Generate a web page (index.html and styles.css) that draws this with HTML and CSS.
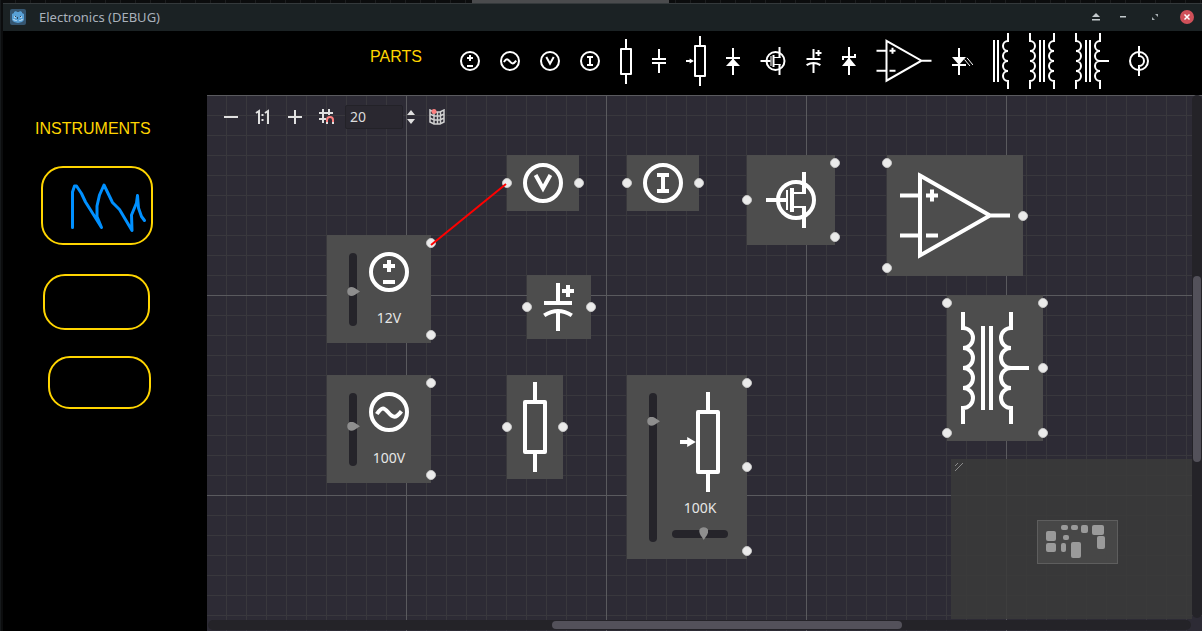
FILE: index.html
```
<!DOCTYPE html>
<html lang="en">
<head>
<meta charset="utf-8">
<title>Electronics (DEBUG)</title>
<link rel="stylesheet" href="styles.css">
</head>
<body>
<svg class="defs" aria-hidden="true">
  <symbol id="dc" viewBox="0 0 20 20"><circle cx="10" cy="10" r="9"/><path d="M10 4v6M7 7h6M7 15h6"/></symbol>
  <symbol id="ac" viewBox="0 0 20 20"><circle cx="10" cy="10" r="9"/><path d="M3.9 11C5.2 9 6 8.2 7 8.2C8.9 8.2 10.4 12.4 12.7 12.4C14 12.4 15 11.2 16.2 9.6"/></symbol>
  <symbol id="voltmeter" viewBox="0 0 20 20"><circle cx="10" cy="10" r="9"/><path d="M6.3 6L10 12.7L13.7 6"/></symbol>
  <symbol id="ammeter" viewBox="0 0 20 20"><circle cx="10" cy="10" r="9"/><path d="M7 6h6M7 14h6M10 6v8"/></symbol>
  <symbol id="resistor" viewBox="0 0 12 45"><rect x="1" y="10" width="10" height="25" stroke-linejoin="round"/><path d="M6 0v9M6 36v9"/></symbol>
  <symbol id="capacitor" viewBox="0 0 14 24"><path d="M0 10h14M0 14h14M7 0v9M7 15v9"/></symbol>
  <symbol id="pot" viewBox="0 0 20 50"><rect x="9" y="10" width="10" height="30" stroke-linejoin="round"/><path d="M14 0v9M14 41v9M0 25h4"/><path class="solid" d="M3.6 22.5L7.9 25L3.6 27.5z"/></symbol>
  <symbol id="diode" viewBox="0 0 14 27"><path d="M7 0v27M0 10h14"/><path class="solid" d="M7 10.500L14 18H0z"/></symbol>
  <symbol id="mosfet" viewBox="0 0 26 28"><g transform="translate(.5 0)"><circle cx="15" cy="14" r="9"/><path d="M0 14h10M13 8v12M19 0v11M19 17v11"/><path stroke-width="1" d="M10.500 9v10M13 10.500h7M13 17.500h7"/></g></symbol>
  <symbol id="polar" viewBox="0 0 16 24"><path d="M7.500 0v9.500M.5 10h14M7.500 14v10M.6 16.200Q7.500 11.800 14.400 16.200M12.500 1v6M9.500 4h6"/></symbol>
  <symbol id="zener" viewBox="0 0 14 28"><path d="M7 0v28M1 13v-3h12v-3"/><path class="solid" d="M7 10.500L14 19H0z"/></symbol>
  <symbol id="opamp" viewBox="0 0 56 44"><path d="M10.500 1.800L45.500 21.700L10.500 41.700zM45.500 21.700h10M.5 11.700h9M.5 31.700h9M16.500 8.700v6M13.500 11.700h6M13.500 31.700h6"/></symbol>
  <symbol id="led" viewBox="0 0 21 27"><path d="M7 0v27M0 17h14"/><path class="solid" d="M0 9H14L7 17z"/><path stroke-width="1" d="M12.500 11.500l5.500 6.500M15 9.800l6 7.200"/></symbol>
  <symbol id="choke" viewBox="0 0 16 56"><path d="M1 7v42M5 7v42M15 0V8a5 5 0 0 0 0 10a5 5 0 0 0 0 10a5 5 0 0 0 0 10a5 5 0 0 0 0 10V56"/></symbol>
  <symbol id="transformer" viewBox="0 0 26 56"><path d="M1 0V8a5 5 0 0 1 0 10a5 5 0 0 1 0 10a5 5 0 0 1 0 10a5 5 0 0 1 0 10V56M11 7v42M15 7v42M25 0V8a5 5 0 0 0 0 10a5 5 0 0 0 0 10a5 5 0 0 0 0 10a5 5 0 0 0 0 10V56"/></symbol>
  <symbol id="tapped" viewBox="0 0 34 56"><path d="M1 0V8a5 5 0 0 1 0 10a5 5 0 0 1 0 10a5 5 0 0 1 0 10a5 5 0 0 1 0 10V56M11 7v42M15 7v42M25 0V8a5 5 0 0 0 0 10a5 5 0 0 0 0 10a5 5 0 0 0 0 10a5 5 0 0 0 0 10V56M25 28h9"/></symbol>
  <symbol id="lamp" viewBox="0 0 20 30"><circle cx="10" cy="15" r="9"/><path d="M10 0v10a5 5 0 0 1 0 10v10"/></symbol>
</svg>

<div class="window">
  <header class="titlebar">
    <svg class="app-icon" viewBox="0 0 16 16" width="16" height="16"><rect width="16" height="16" rx="2" fill="#355570"/><path fill="#58a0d6" d="M2 5l2-1V3l2-1 1 1h2l1-1 2 1v1l2 1v6l-2 2-4 1-4-1-2-2z"/><path fill="#a5cdea" d="M4 7h2v2H4zM10 7h2v2h-2zM3 10h2v1h2v1h2v-1h2v-1h2v1l-2 1H5l-2-1z"/><path fill="#2a4660" d="M5 7h1v1H5zM10 7h1v1h-1zM7 8h1v2H7z"/></svg>
    <h1 class="title">Electronics (DEBUG)</h1>
    <div class="window-buttons">
      <button aria-label="Shade"><svg viewBox="0 0 16 16"><path fill="#c3c9cc" d="M8 4l4 4H4zM4 10h8v1.500H4z"/></svg></button>
      <button aria-label="Minimize"><svg viewBox="0 0 16 16"><path fill="#c3c9cc" d="M5 7h6v1.500H5z"/></svg></button>
      <button aria-label="Maximize"><svg viewBox="0 0 16 16"><path fill="#a5adb1" d="M8 5h3v3zM5 8v3h3z"/></svg></button>
      <button aria-label="Close"><svg viewBox="0 0 16 16"><circle cx="8" cy="8" r="7" fill="#cf5059"/><path stroke="#fff" stroke-width="1.500" d="M5.500 5.500l5 5M10.500 5.500l-5 5"/></svg></button>
    </div>
  </header>

  <nav class="parts">
    <h2 class="heading parts-heading">PARTS</h2>
    <button class="part" aria-label="DC source"><svg class="sym" width="20" height="20"><use href="#dc"/></svg></button>
    <button class="part" aria-label="AC source"><svg class="sym" width="20" height="20"><use href="#ac"/></svg></button>
    <button class="part" aria-label="Voltmeter"><svg class="sym" width="20" height="20"><use href="#voltmeter"/></svg></button>
    <button class="part" aria-label="Ammeter"><svg class="sym" width="20" height="20"><use href="#ammeter"/></svg></button>
    <button class="part" aria-label="Resistor"><svg class="sym" width="12" height="45"><use href="#resistor"/></svg></button>
    <button class="part" aria-label="Capacitor"><svg class="sym" width="14" height="24"><use href="#capacitor"/></svg></button>
    <button class="part" aria-label="Potentiometer"><svg class="sym" width="20" height="50"><use href="#pot"/></svg></button>
    <button class="part" aria-label="Diode"><svg class="sym" width="14" height="27"><use href="#diode"/></svg></button>
    <button class="part" aria-label="MOSFET"><svg class="sym" width="26" height="28"><use href="#mosfet"/></svg></button>
    <button class="part" aria-label="Polarized capacitor"><svg class="sym" width="16" height="24"><use href="#polar"/></svg></button>
    <button class="part" aria-label="Zener diode"><svg class="sym" width="14" height="28"><use href="#zener"/></svg></button>
    <button class="part" aria-label="Op-amp"><svg class="sym" width="56" height="44"><use href="#opamp"/></svg></button>
    <button class="part" aria-label="LED"><svg class="sym" width="21" height="27"><use href="#led"/></svg></button>
    <button class="part" aria-label="Inductor"><svg class="sym" width="16" height="56"><use href="#choke"/></svg></button>
    <button class="part" aria-label="Transformer"><svg class="sym" width="26" height="56"><use href="#transformer"/></svg></button>
    <button class="part" aria-label="Center-tapped transformer"><svg class="sym" width="34" height="56"><use href="#tapped"/></svg></button>
    <button class="part" aria-label="Lamp"><svg class="sym" width="20" height="30"><use href="#lamp"/></svg></button>
  </nav>

  <aside class="sidebar">
    <h2 class="heading">INSTRUMENTS</h2>
    <button class="instrument scope" aria-label="Oscilloscope"><svg viewBox="0 0 108 75" width="108" height="75"><path d="M29.500 59.500V24L31.500 18h2L38.500 25.500L42.500 34L48.500 43.500L58.500 59.500L54 48.500V38L56.500 27L61 17L69.500 34.500L76.500 41.500L89 62.500L88.500 47L93.500 35L94.500 27.500L95.500 40L98.500 48.500L101.500 52.500"/></svg></button>
    <button class="instrument second" aria-label="Instrument 2"></button>
    <button class="instrument third" aria-label="Instrument 3"></button>
  </aside>

  <main class="graph">
    <div class="graph-tools">
      <button class="tool" aria-label="Zoom out"><svg viewBox="0 0 16 16"><path stroke="#e0e0e0" stroke-width="2" d="M1 8h14"/></svg></button>
      <button class="tool" aria-label="Zoom reset"><svg viewBox="0 0 16 16"><path fill="none" stroke="#e0e0e0" stroke-width="2" d="M1 4l3-2v13M10 4l3-2v13M7.500 5v2M7.500 10v2"/></svg></button>
      <button class="tool" aria-label="Zoom in"><svg viewBox="0 0 16 16"><path stroke="#e0e0e0" stroke-width="2" d="M1 8h14M8 1v14"/></svg></button>
      <button class="tool" aria-label="Snap to grid"><svg viewBox="0 0 16 16"><path fill="none" stroke="#e0e0e0" stroke-width="2" d="M4 0v14M10 0v6M0 4h14M0 10h7"/><path fill="none" stroke="#fc7f7f" stroke-width="2" d="M8 13v-2a3 3 0 0 1 6 0v2"/><path stroke="#e0e0e0" stroke-width="2" d="M8 13v2M14 13v2"/></svg></button>
      <input class="snap" type="text" value="20" aria-label="Snap distance">
      <button class="stepper" aria-label="Change snap distance"><svg viewBox="0 0 8 16" width="8" height="16"><path fill="#e0e0e0" d="M4 1l4 5H0zM4 15l4-5H0z"/></svg></button>
      <button class="tool map-tool" aria-label="Toggle minimap"><svg viewBox="0 0 16 16"><path fill="none" stroke="#d0d0d0" stroke-width="1.500" d="M1 1v12l4 2h6l4-2V1l-4 2H5zM5 3v12M8.500 3v12M11.500 3v12M1 5l4 2h6l4-2M1 9l4 2h6l4-2"/><circle cx="5" cy="2.500" r="2.500" fill="#fc7f7f"/></svg></button>
    </div>

    <section class="node n-dc">
      <input class="vslider" type="range" value="47" aria-label="Voltage">
      <div class="node-col"><svg class="sym" width="40" height="40"><use href="#dc"/></svg><output>12V</output></div>
      <div class="ports right"><i></i><i></i></div>
    </section>
    <section class="node n-ac">
      <input class="vslider" type="range" value="55" aria-label="Amplitude">
      <div class="node-col"><svg class="sym" width="40" height="40"><use href="#ac"/></svg><output>100V</output></div>
      <div class="ports right"><i></i><i></i></div>
    </section>
    <section class="node n-volt">
      <svg class="sym" width="40" height="40"><use href="#voltmeter"/></svg>
      <div class="ports left"><i></i></div><div class="ports right"><i></i></div>
    </section>
    <section class="node n-amp">
      <svg class="sym" width="40" height="40"><use href="#ammeter"/></svg>
      <div class="ports left"><i></i></div><div class="ports right"><i></i></div>
    </section>
    <section class="node n-mosfet">
      <svg class="sym" width="52" height="56"><use href="#mosfet"/></svg>
      <div class="ports left"><i></i></div><div class="ports right"><i></i><i></i></div>
    </section>
    <section class="node n-opamp">
      <svg class="sym" width="112" height="88"><use href="#opamp"/></svg>
      <div class="ports left"><i></i><i></i></div><div class="ports right"><i></i></div>
    </section>
    <section class="node n-polar">
      <svg class="sym" width="32" height="48"><use href="#polar"/></svg>
      <div class="ports left"><i></i></div><div class="ports right"><i></i></div>
    </section>
    <section class="node n-resistor">
      <svg class="sym" width="24" height="90"><use href="#resistor"/></svg>
      <div class="ports left"><i></i></div><div class="ports right"><i></i></div>
    </section>
    <section class="node n-pot">
      <input class="vslider" type="range" value="83" aria-label="Resistance">
      <div class="node-col tight"><svg class="sym" width="40" height="100"><use href="#pot"/></svg><output>100K</output><input class="hslider" type="range" value="58" aria-label="Wiper position"></div>
      <div class="ports right"><i></i><i></i><i></i></div>
    </section>
    <section class="node n-tapped">
      <svg class="sym" width="68" height="112"><use href="#tapped"/></svg>
      <div class="ports left"><i></i><i></i></div><div class="ports right"><i></i><i></i><i></i></div>
    </section>

    <svg class="wire" width="400" height="200"><path d="M224 150L299 89"/></svg>

    <div class="minimap">
      <svg class="grip" viewBox="0 0 8 8" width="8" height="8"><path d="M0 8L8 0M0 3L3 0"/></svg>
      <svg class="overview" viewBox="0 0 81 44" width="81" height="44">
        <rect x=".5" y=".5" width="80" height="43" fill="#474747" stroke="#5e5e5e"/>
        <g fill="#9a9a9a"><rect x="9" y="11" width="10" height="10" rx="2"/><rect x="9" y="23" width="10" height="9" rx="2"/><rect x="24" y="5" width="7" height="5" rx="2"/><rect x="34" y="5" width="7" height="5" rx="2"/><rect x="26" y="15" width="6" height="5" rx="2"/><rect x="24" y="23" width="5" height="9" rx="2"/><rect x="34" y="22" width="10" height="16" rx="2"/><rect x="44" y="5" width="7" height="8" rx="2"/><rect x="55" y="5" width="12" height="10" rx="2"/><rect x="60" y="16" width="8" height="13" rx="2"/></g>
      </svg>
    </div>
    <div class="scroll scroll-y"><div class="scroll-thumb"></div></div>
    <div class="scroll scroll-x"><div class="scroll-thumb"></div></div>
  </main>
</div>
</body>
</html>
```

FILE: styles.css
```
* { box-sizing: border-box; }

body {
  margin: 0;
  background:
    linear-gradient(#4a4b4d, #4a4b4d) 472px 0 / 197px 3px no-repeat,
    repeating-linear-gradient(90deg, #1c1d1e 0 1px, #0b0c0d 1px 15px);
  font: 14px/20px "Noto Sans", sans-serif;
  color: #e6e6e6;
}

button {
  padding: 0;
  border: 0;
  background: none;
  color: inherit;
  font: inherit;
}

svg { display: block; flex: none; }

.defs { position: absolute; width: 0; height: 0; }

.sym { fill: none; stroke: #fff; stroke-width: 2; }
.solid { fill: #fff; stroke: none; }

.window {
  display: grid;
  grid-template: 28px 64px 1fr / 204px 1fr;
  height: 100vh;
  padding: 3px 0 0 2px;
  border-left: 1px solid #16191b;
  background: #000;
  background-clip: content-box;
}

/* Title bar */
.titlebar {
  grid-column: 1 / -1;
  display: flex;
  align-items: center;
  padding: 0 7px 1px;
  border-top: 1px solid #34393b;
  background: #1b2224;
}
.title {
  flex: 1;
  margin: 0 0 0 13px;
  font-size: 13px;
  font-weight: 400;
  color: #a9b1bb;
}
.window-buttons { display: flex; gap: 16px; }
.window-buttons button:first-child { margin-right: -5px; }
.window-buttons svg { width: 16px; height: 16px; }

/* Part palette */
.heading {
  margin: 0;
  font: 16px/20px "Liberation Sans", Arial, sans-serif;
  color: #ffd500;
}
.parts {
  grid-column: 1 / -1;
  display: flex;
  align-items: center;
  gap: 20px;
  padding: 0 0 4px 367px;
}
.parts-heading { flex: 0 0 70px; padding: 0 0 8px; }

/* Instruments */
.sidebar {
  display: flex;
  flex-direction: column;
  align-items: flex-start;
  padding: 24px 0 0 32px;
}
.instrument { border: 2px solid #ffd500; border-radius: 22px; }
.instrument path { fill: none; stroke: #0090ff; stroke-width: 3; stroke-linejoin: round; stroke-linecap: round; }
.scope { margin: 27px 0 0 6px; }
.second { width: 107px; height: 56px; margin: 29px 0 0 8px; }
.third { width: 103px; height: 53px; margin: 26px 0 0 13px; }

/* Graph canvas */
.graph {
  position: relative;
  overflow: hidden;
  background:
    linear-gradient(90deg, #5a5a5e 1px, transparent 1px) 199px 0 / 200px 200px,
    linear-gradient(#5a5a5e 1px, transparent 1px) 0 0 / 200px 200px,
    linear-gradient(90deg, #39383d 1px, transparent 1px) 19px 0 / 20px 20px,
    linear-gradient(#39383d 1px, transparent 1px) 0 0 / 20px 20px,
    #2d2b35;
}
.graph-tools {
  position: absolute;
  left: 8px;
  top: 10px;
  display: flex;
  align-items: center;
}
.tool { width: 32px; height: 24px; padding: 0 8px; }
.tool svg { width: 16px; height: 16px; }
.snap {
  width: 58px;
  height: 24px;
  margin: 0 4px 0 2px;
  padding: 0 4px 2px;
  border: 1px solid #232228;
  border-radius: 2px;
  background: #2a2830;
  color: #dcdcdc;
  font: inherit;
}
.map-tool { margin-left: 6px; }

.node {
  position: absolute;
  display: flex;
  padding: 17px 14px;
  background: #4d4d4d;
}
.node-col {
  display: flex;
  flex-direction: column;
  align-items: center;
  gap: 16px;
  width: 52px;
}
.node-col.tight { gap: 6px; width: 62px; margin-left: 6px; }
.n-dc, .n-ac, .n-pot { padding: 17px 16px 15px; }
.n-dc { left: 120px; top: 140px; }
.n-ac { left: 120px; top: 280px; }
.n-volt { left: 300px; top: 60px; padding: 8px 16px; }
.n-amp { left: 420px; top: 60px; padding: 8px 16px; }
.n-mosfet { left: 540px; top: 60px; padding: 17px 18px; }
.n-opamp { left: 680px; top: 60px; padding: 17px 12px 16px; }
.n-polar { left: 320px; top: 180px; padding: 8px 16px; }
.n-resistor { left: 300px; top: 280px; padding: 7px 16px; }
.n-pot { left: 420px; top: 280px; }
.n-tapped { left: 740px; top: 200px; }

.ports {
  position: absolute;
  top: 3px;
  bottom: 3px;
  display: flex;
  flex-direction: column;
  justify-content: space-between;
}
.ports.left { left: -5px; }
.ports.right { right: -5px; }
.ports i {
  width: 10px;
  height: 10px;
  border: 1px solid #c4c4c4;
  border-radius: 50%;
  background: #ebebeb;
}
.ports i:only-child { margin: auto 0; }

/* Sliders */
.vslider, .hslider { appearance: none; margin: 0; background: none; }
.vslider {
  width: 20px;
  height: 73px;
  margin-top: 1px;
  writing-mode: vertical-lr;
  direction: rtl;
}
.n-pot .vslider { height: 149px; }
.hslider { width: 56px; height: 20px; }
.vslider::-webkit-slider-runnable-track {
  width: 8px;
  border-radius: 4px;
  background: #25242a;
}
.hslider::-webkit-slider-runnable-track {
  height: 8px;
  border-radius: 4px;
  background: #25242a;
}
.vslider::-webkit-slider-thumb {
  appearance: none;
  width: 13px;
  height: 9px;
  margin-left: -2px;
  background: #8e8e8e;
  clip-path: path("M4 0C7 0 9 2 13 4.500C9 7 7 9 4 9C-1 9 -1 0 4 0z");
}
.hslider::-webkit-slider-thumb {
  appearance: none;
  width: 9px;
  height: 13px;
  margin-top: -3px;
  background: #8e8e8e;
  clip-path: path("M0 4C0 7 2 9 4.500 13C7 9 9 7 9 4C9 -1 0 -1 0 4z");
}

.wire { position: absolute; left: 0; top: 0; pointer-events: none; }
.wire path { stroke: #f00; stroke-width: 2; }

/* Minimap */
.minimap {
  position: absolute;
  right: 10px;
  bottom: 12px;
  width: 241px;
  height: 160px;
  padding: 61px 0 0 86px;
  background: rgba(58, 58, 58, .88);
}
.grip { position: absolute; left: 4px; top: 4px; stroke: #8a8a8a; }

/* Scroll bars */
.scroll { position: absolute; border-radius: 5px; background: #242328; }
.scroll-thumb { border-radius: 4px; background: #53515a; }
.scroll-y { top: 0; right: 0; bottom: 13px; width: 10px; padding: 181px 1px 0; }
.scroll-y .scroll-thumb { height: 186px; }
.scroll-x { left: 1px; right: 11px; bottom: 1px; height: 10px; padding: 1px 0 1px 344px; }
.scroll-x .scroll-thumb { width: 350px; height: 8px; }
```
